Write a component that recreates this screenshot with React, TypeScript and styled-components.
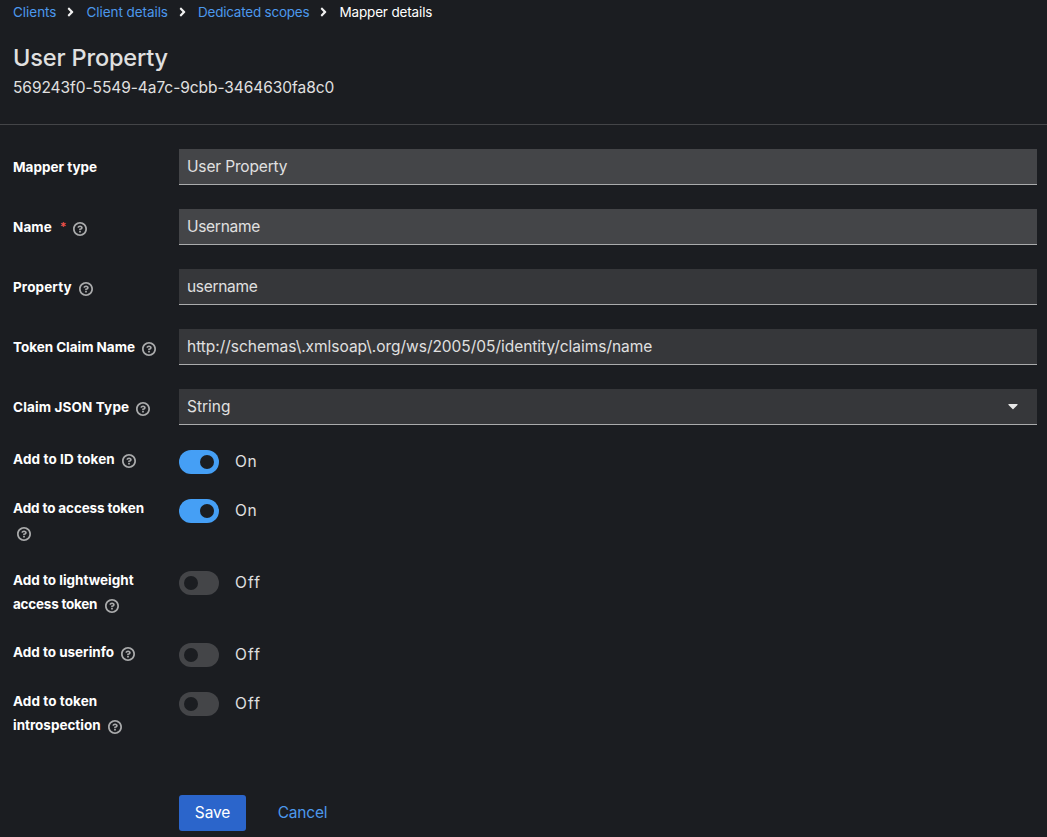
import React from "react";
import styled, { createGlobalStyle } from "styled-components";

const GlobalStyle = createGlobalStyle`
  *, *::before, *::after { box-sizing: border-box; }
  body {
    margin: 0;
    background: #1b1d21;
    color: #e0e0e0;
    font-family: Inter, "Open Sans", sans-serif;
    font-size: 15.5px;
    line-height: 24px;
    overflow: hidden;
  }
`;

const Page = styled.main`
  height: 837px;
  display: flex;
  flex-direction: column;
  overflow: hidden;
`;

const Header = styled.header`
  height: 125px;
  padding-left: 13px;
  border-bottom: 1px solid #444548;
`;

const Text = styled.span<{ $track?: number }>`
  letter-spacing: ${(p) => p.$track ?? 0}px;
  white-space: nowrap;
`;

const Breadcrumb = styled.nav`
  display: flex;
  align-items: center;
  height: 24px;
  font-size: 13.5px;
`;

const Crumb = styled(Text)<{ $current?: boolean }>`
  color: ${(p) => (p.$current ? "#ffffff" : "#4c98ec")};
`;

const Separator = styled.svg`
  width: 7px;
  height: 14px;
  margin: 0 12px 0 11px;
  fill: #f0f0f0;
`;

const Title = styled.h1`
  margin: 18px 0 0;
  font-size: 23.5px;
  font-weight: 450;
  line-height: 31px;
  letter-spacing: -0.15px;
`;

const Subtitle = styled.p`
  margin: 3px 0 0;
`;

const Form = styled.form`
  display: flex;
  flex-direction: column;
  gap: 24px;
  padding: 24px 10px 0 13px;
`;

const Group = styled.div<{ $toggle?: boolean }>`
  display: grid;
  grid-template-columns: 166px 1fr;
  align-items: start;
  min-height: ${(p) => (p.$toggle ? 25 : 36)}px;
`;

const Label = styled.label<{ $toggle?: boolean }>`
  display: flex;
  flex-direction: column;
  padding-top: ${(p) => (p.$toggle ? 0 : 8)}px;
  color: #ffffff;
  font-size: 13.5px;
  font-weight: 700;
`;

const LabelLine = styled.span`
  display: flex;
  align-items: center;
  height: 24px;
`;

const LabelText = styled(Text)`
  margin-top: -5px;
`;

const Required = styled.span`
  margin: -4px 0 0 8px;
  color: #f0524b;
  font-size: 12px;
  font-weight: 600;
  letter-spacing: -0.5px;
`;

const HelpSvg = styled.svg<{ $wrapped?: boolean }>`
  width: 14px;
  height: 14px;
  margin-left: ${(p) => (p.$wrapped ? 4 : 7.25)}px;
  fill: #aaabac;
`;

const Control = styled.div<{ $readOnly?: boolean }>`
  display: flex;
  align-items: center;
  justify-content: space-between;
  height: 36px;
  padding: 0 19px 0 8px;
  background: ${(p) => (p.$readOnly ? "#444548" : "#36373a")};
  border-bottom: 1px solid #aaabac;
`;

const Caret = styled.svg`
  width: 10px;
  height: 16px;
  margin-bottom: 2px;
  fill: #e8e8e8;
`;

const ToggleRow = styled.div`
  display: flex;
  align-items: center;
  gap: 16px;
  height: 24px;
  margin-top: 1px;
`;

const Track = styled.span<{ $on: boolean }>`
  display: flex;
  align-items: center;
  justify-content: ${(p) => (p.$on ? "flex-end" : "flex-start")};
  width: 40px;
  height: 24px;
  padding: 0 5px;
  border-radius: 12px;
  background: ${(p) => (p.$on ? "#459ff5" : "#444548")};
`;

const Knob = styled.span`
  width: 14px;
  height: 14px;
  border-radius: 50%;
  background: #1b1d21;
`;

const Actions = styled.div`
  display: flex;
  gap: 16px;
  margin: 32px 0 0 166px;
`;

const Button = styled.button<{ $primary?: boolean }>`
  width: ${(p) => (p.$primary ? 67 : 81)}px;
  height: 36px;
  padding: 0;
  border: 0;
  border-radius: 3px;
  background: ${(p) => (p.$primary ? "#2b65cb" : "transparent")};
  color: ${(p) => (p.$primary ? "#ffffff" : "#4c98ec")};
  font: inherit;
`;

const Chevron = () => (
  <Separator viewBox="0 0 256 512">
    <path d="M224.3 273l-136 136c-9.4 9.4-24.6 9.4-33.9 0l-22.6-22.6c-9.4-9.4-9.4-24.6 0-33.9l96.4-96.4-96.4-96.4c-9.4-9.4-9.4-24.6 0-33.9L54.3 103c9.4-9.4 24.6-9.4 33.9 0l136 136c9.5 9.4 9.5 24.6.1 34z" />
  </Separator>
);

const Help = ({ wrapped }: { wrapped?: boolean }) => (
  <HelpSvg $wrapped={wrapped} viewBox="0 0 1024 1024">
    <path d="M521.3,576 C627.5,576 713.7,502 713.7,413.7 C713.7,325.4 627.6,253.6 521.3,253.6 C366,253.6 334.5,337.7 329.2,407.2 C329.2,414.3 335.2,416 343.5,416 L445,416 C450.5,416 458,415.5 460.8,406.5 C460.8,362.6 582.9,357.1 582.9,413.6 C582.9,441.9 556.2,470.9 521.3,473 C486.4,475.1 447.3,479.8 447.3,521.7 L447.3,553.8 C447.3,570.8 456.1,576 472,576 Z M575.3,751.3 L575.3,655.3 C575.3,646 568,639.3 559.3,639.3 L463.3,639.3 C454,639.3 447.3,646.5 447.3,655.3 L447.3,751.3 C447.3,760.5 454.5,767.3 463.3,767.3 L559.3,767.3 C568,767.3 575.3,760 575.3,751.3 Z M512,896 C300.2,896 128,723.9 128,512 C128,300.3 300.2,128 512,128 C723.8,128 896,300.2 896,512 C896,723.8 723.7,896 512,896 M512.1,0 C229.7,0 0,229.8 0,512 C0,794.2 229.8,1024 512.1,1024 C794.4,1024 1024,794.3 1024,512 C1024,229.7 794.4,0 512.1,0" />
  </HelpSvg>
);

type Line = [text: string, track: number];

interface Field {
  label: Line;
  value: Line;
  readOnly?: boolean;
  required?: boolean;
  help?: boolean;
  select?: boolean;
}

const fields: Field[] = [
  { label: ["Mapper type", 0], value: ["User Property", -0.16], readOnly: true },
  { label: ["Name", 0.1], value: ["Username", -0.3], readOnly: true, required: true, help: true },
  { label: ["Property", 0.12], value: ["username", -0.32], help: true },
  {
    label: ["Token Claim Name", -0.04],
    value: ["http://schemas\\.xmlsoap\\.org/ws/2005/05/identity/claims/name", -0.03],
    help: true,
  },
  { label: ["Claim JSON Type", 0.14], value: ["String", 0], help: true, select: true },
];

const toggles: { lines: Line[]; on: boolean; helpBelow?: boolean }[] = [
  { lines: [["Add to ID token", 0.12]], on: true },
  { lines: [["Add to access token", -0.13]], on: true, helpBelow: true },
  { lines: [["Add to lightweight", 0], ["access token", -0.24]], on: false },
  { lines: [["Add to userinfo", -0.02]], on: false },
  { lines: [["Add to token", 0.08], ["introspection", -0.02]], on: false },
];

export default function App() {
  return (
    <Page>
      <GlobalStyle />
      <Header>
        <Breadcrumb>
          <Crumb $track={-0.03}>Clients</Crumb>
          <Chevron />
          <Crumb $track={-0.06}>Client details</Crumb>
          <Chevron />
          <Crumb $track={-0.22}>Dedicated scopes</Crumb>
          <Chevron />
          <Crumb $current $track={-0.15}>Mapper details</Crumb>
        </Breadcrumb>
        <Title>User Property</Title>
        <Subtitle>
          <Text $track={-0.06}>569243f0-5549-4a7c-9cbb-3464630fa8c0</Text>
        </Subtitle>
      </Header>
      <Form>
        {fields.map((f) => (
          <Group key={f.label[0]}>
            <Label>
              <LabelLine>
                <LabelText $track={f.label[1]}>{f.label[0]}</LabelText>
                {f.required && <Required>*</Required>}
                {f.help && <Help />}
              </LabelLine>
            </Label>
            <Control $readOnly={f.readOnly}>
              <Text $track={f.value[1]}>{f.value[0]}</Text>
              {f.select && (
                <Caret viewBox="0 0 320 512">
                  <path d="M31.3 192h257.3c17.8 0 26.7 21.5 14.1 34.1L174.1 354.8c-7.8 7.8-20.5 7.8-28.3 0L17.2 226.1C4.6 213.5 13.5 192 31.3 192z" />
                </Caret>
              )}
            </Control>
          </Group>
        ))}
        {toggles.map((t) => (
          <Group key={t.lines[0][0]} $toggle>
            <Label $toggle>
              {t.lines.map(([text, track], i) => (
                <LabelLine key={text}>
                  <LabelText $track={track}>{text}</LabelText>
                  {!t.helpBelow && i === t.lines.length - 1 && <Help />}
                </LabelLine>
              ))}
              {t.helpBelow && (
                <LabelLine>
                  <Help wrapped />
                </LabelLine>
              )}
            </Label>
            <ToggleRow>
              <Track $on={t.on}>
                <Knob />
              </Track>
              <Text $track={t.on ? 0.7 : 1.1}>{t.on ? "On" : "Off"}</Text>
            </ToggleRow>
          </Group>
        ))}
        <Actions>
          <Button type="button" $primary>
            <Text $track={-0.15}>Save</Text>
          </Button>
          <Button type="button">
            <Text $track={-0.2}>Cancel</Text>
          </Button>
        </Actions>
      </Form>
    </Page>
  );
}
